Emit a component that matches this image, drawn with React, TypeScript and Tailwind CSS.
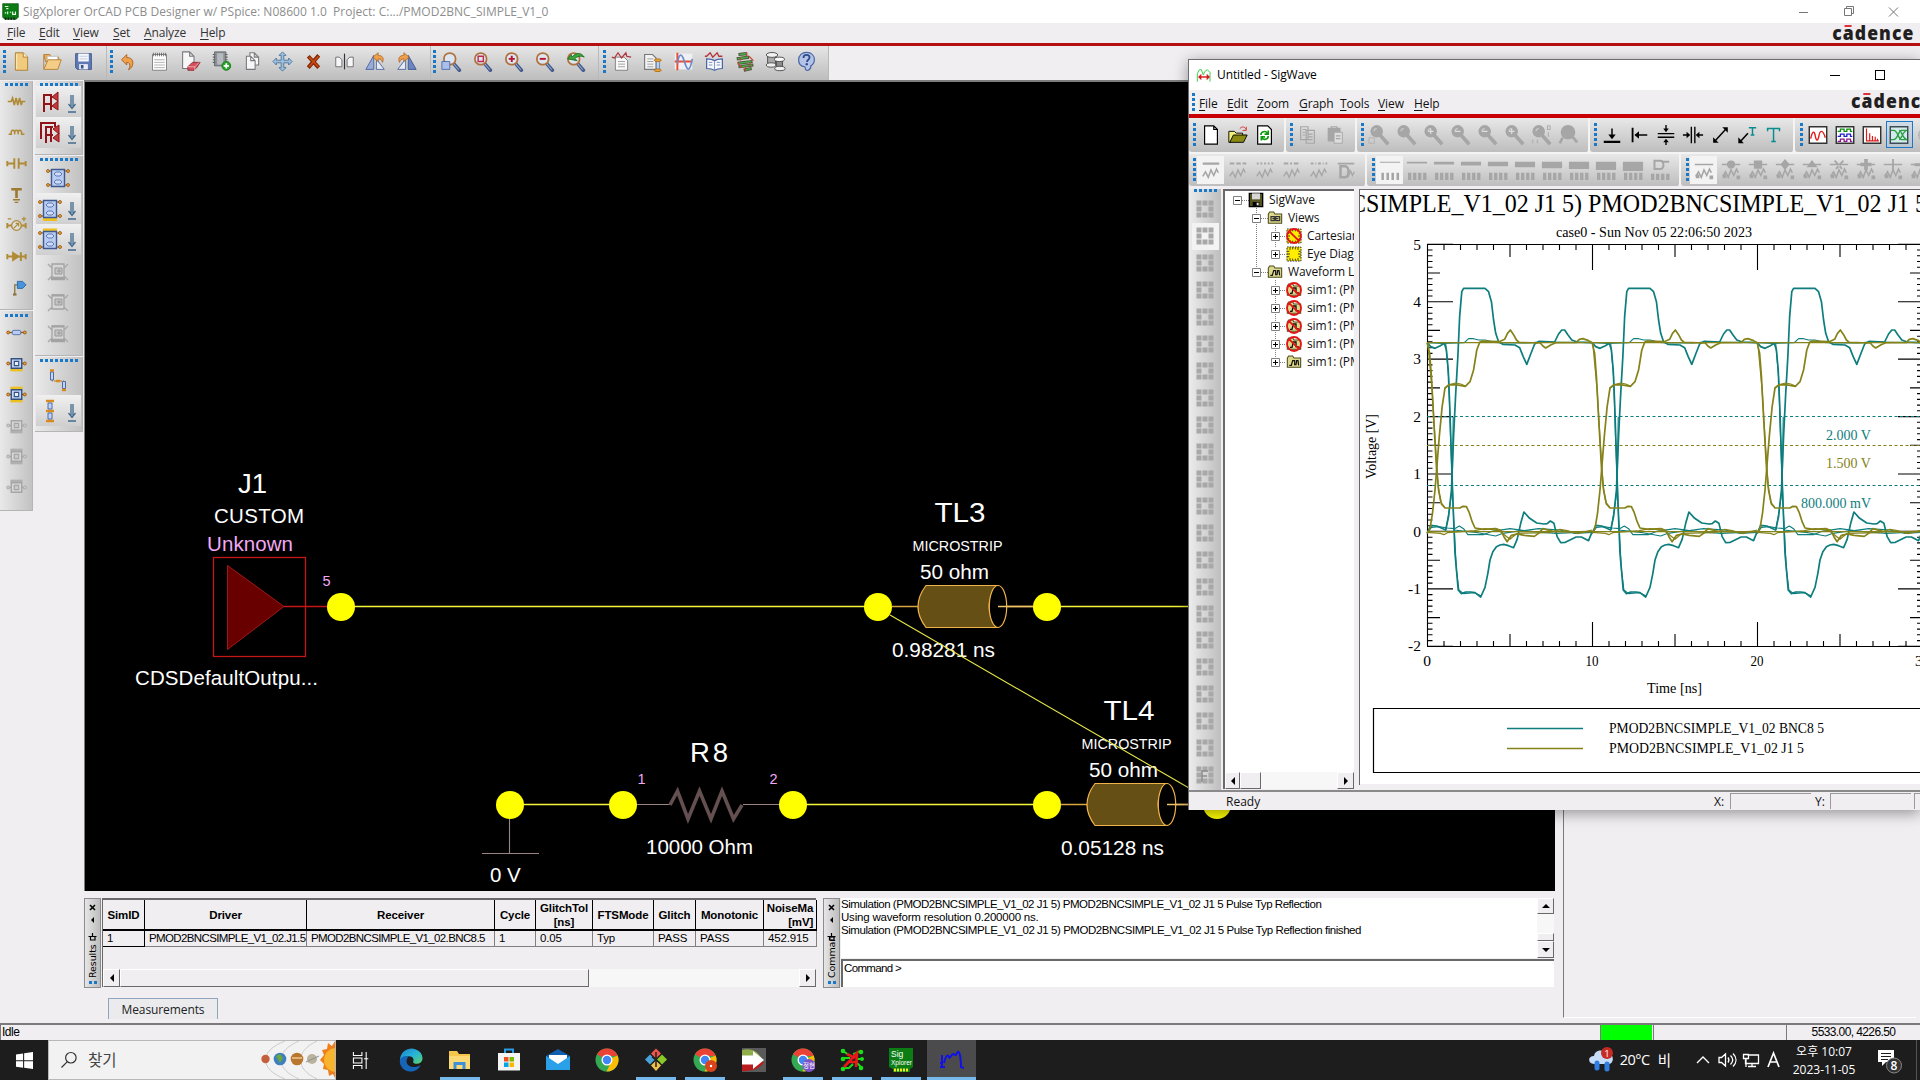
import React from 'react';

const UI = "font-['Open_Sans','Noto_Sans_CJK_KR',sans-serif]";
const ARIAL = "font-['Liberation_Sans',Arial,sans-serif]";

type Kids = { children?: React.ReactNode };

function Svg({ s = 24, className = '', children }: Kids & { s?: number; className?: string }) {
  return (
    <svg width={s} height={s} viewBox="0 0 24 24" fill="none" className={`block shrink-0 ${className}`}>
      {children}
    </svg>
  );
}

function Dots({ vertical = true, n = 5, className = '' }: { vertical?: boolean; n?: number; className?: string }) {
  return (
    <div className={`flex shrink-0 ${vertical ? 'flex-col gap-[2px]' : 'flex-row gap-[2px]'} ${className}`}>
      {Array.from({ length: n }, (_, i) => (
        <i key={i} className="block h-[3px] w-[3px] bg-[#1a78c8]" />
      ))}
    </div>
  );
}

function Cadence({ className = '' }: { className?: string }) {
  return (
    <div className={`scale-x-[0.88] font-['Open_Sans',sans-serif] text-[20px] leading-[20px] font-extrabold tracking-[1.2px] whitespace-nowrap text-[#231f20] ${className}`}>
      c
      <span className="relative">
        a<i className="absolute top-[6px] left-[2px] h-[2px] w-[8px] bg-[#e0303a]" />
      </span>
      dence
    </div>
  );
}

/* ---------- main toolbar icons ---------- */
const Page = ({ x = 5, y = 2, w = 14, h = 19, fill = '#f7f7f7', stroke = '#77787c' }) => (
  <path d={`M${x} ${y}h${w - 5}l5 5v${h - 5}h${-w}z M${x + w - 5} ${y}v5h5`} fill={fill} stroke={stroke} strokeWidth="1.2" />
);
const Lens = ({ children }: Kids) => (
  <>
    <path d="M15 15l6 7" stroke="#44598c" strokeWidth="4" strokeLinecap="round" />
    <path d="M14 14l6 7" stroke="#b9cbe9" strokeWidth="1" strokeLinecap="round" />
    <circle cx="10" cy="9" r="6.7" fill="#dce6f3" stroke="#b0713c" strokeWidth="2" />
    {children}
  </>
);

const ICONS: Record<string, React.ReactNode> = {
  new: (<><path d="M5 2h9l5 5v15H5z" fill="#f0cb7d" stroke="#a8782e" /><path d="M14 2v5h5" fill="#fff0c9" stroke="#a8782e" /><path d="M6.500 3.500v17" stroke="#fff0c9" /></>),
  open: (<><path d="M2 4h7l2 3h8v5H4z" fill="#e6ac54" stroke="#b37a32" /><path d="M6 6h12v7H6z" fill="#fff" stroke="#bbb" /><path d="M2 21L7 10h15l-4 11z" fill="#f4cd86" stroke="#b37a32" /><path d="M2 5v15" stroke="#b37a32" /></>),
  save: (<><path d="M3 3h18v18H5l-2-2z" fill="#5f79b5" stroke="#3d5285" /><path d="M6 3h12v9H6z" fill="#f6f8fd" /><path d="M7.500 6h9M7.500 9h9" stroke="#b9c3da" /><path d="M7 15h10v6H7z" fill="#e8ecf5" /><path d="M9 16h3v4H9z" fill="#3d5285" /></>),
  undo: (<path d="M4 10l6-6v3.500c5 0 7 2.500 7 6.500 0 3.500-2 5.500-5 7.500 2-3 2-5 1-7-.5-1-1.500-1.500-3-1.500V16z" fill="#f0a04a" stroke="#a35b1c" />),
  notes: (<><path d="M4 4h16v18H4z" fill="#fdfdfd" stroke="#77787c" /><path d="M6 10h12M6 13h12M6 16h12M6 19h12" stroke="#aaa" /><path d="M5 2v4M7.300 2v4M9.600 2v4M12 2v4M14.300 2v4M16.700 2v4M19 2v4" stroke="#66676b" /></>),
  erase: (<><Page x={3} y={1} w={13} h={19} /><path d="M9 18l5-5h9l-4 6-3 3H9z" fill="#d4505c" stroke="#8d2733" /><path d="M9 18h8v4M17 18l5-5" stroke="#f3b3b8" /></>),
  chip: (<><path d="M4 1h13v16H4z" fill="#8c9196" stroke="#62666b" /><path d="M7 2.500h7v13H7z" fill="#b5babf" /><path d="M2 4h3M2 7h3M2 10h3M2 13h3M16 4h3M16 7h3M16 10h3" stroke="#62666b" strokeWidth="1.300" /><circle cx="17.500" cy="17" r="5" fill="#28a428" stroke="#157515" /><path d="M17.500 14v6M14.500 17h6" stroke="#fff" strokeWidth="2" /></>),
  copy: (<><Page x={9} y={2} w={10} h={14} /><Page x={5} y={6} w={10} h={15} /></>),
  move: (<path d="M12 1l4 4h-2.500v5.500H19V8l4 4-4 4v-2.500h-5.500V19H16l-4 4-4-4h2.500v-5.500H5V16l-4-4 4-4v2.500h5.500V5H8z" fill="#9fc0dd" stroke="#48759c" />),
  del: (<><path d="M6 6l12 13M18 5L6 19" stroke="#842704" strokeWidth="4.400" /><path d="M7 7l10.500 11M17.500 6L7 18" stroke="#c44a14" strokeWidth="2" /></>),
  mirror: (<><path d="M12 3v18" stroke="#333" strokeWidth="1.300" /><path d="M2 7h4l3 3v8H2z" fill="#f7f7f7" stroke="#66676b" /><path d="M22 7h-4l-3 3v8h7z" fill="#f7f7f7" stroke="#66676b" /></>),
  rotl: (<><path d="M1 21L10 5v16z" fill="#97acd8" stroke="#48609b" /><path d="M13 21V9l9 12z" fill="#e6eaf3" stroke="#48609b" /><path d="M9 7l6-5v3c5 0 7 3 5 8-1-3-2-4-5-4v3z" fill="#f0a04a" stroke="#a35b1c" strokeWidth=".8" /></>),
  rotr: (<><path d="M23 21L14 5v16z" fill="#6a86c4" stroke="#3d5285" /><path d="M11 21V9L2 21z" fill="#e6eaf3" stroke="#48609b" /><path d="M15 7L9 2v3C4 5 2 8 4 13c1-3 2-4 5-4v3z" fill="#f0a04a" stroke="#a35b1c" strokeWidth=".8" /></>),
  zfit: (<><Lens /><path d="M1 12h9v9H1z" fill="#a9c0ec" stroke="#4c66a5" /></>),
  zbox: (<Lens><path d="M7 6h6v6H7z" stroke="#c0284a" strokeWidth="1.600" /></Lens>),
  zin: (<Lens><path d="M10 5.500v7M6.500 9h7" stroke="#b51432" strokeWidth="2.200" /></Lens>),
  zout: (<Lens><path d="M6.500 9h7" stroke="#b51432" strokeWidth="2.200" /></Lens>),
  zprev: (<><Lens /><path d="M3 9l4-5 1 3c4-5 10-6 14 0-4-2-8-1-11 2l3 2z" fill="#3da53d" stroke="#1f6b1f" /></>),
  report: (<><path d="M5 7h10l4 4v11H5z" fill="#f8f8f8" stroke="#77787c" /><path d="M8 12h8M8 15h8M8 18h8" stroke="#999" /><path d="M1 7l3 1 4-6 4 6 5-6 1 4 5 1" stroke="#b3323a" strokeWidth="1.400" /></>),
  doc2: (<><path d="M3 4h9l4 4v13H3z" fill="#f3f3f3" stroke="#77787c" strokeWidth="1.300" /><path d="M6 9h7M6 12h7M6 15h7M6 18h7" stroke="#999" /><path d="M16.500 12v9M20 12v9" stroke="#6c95d4" strokeWidth="1.300" /><ellipse cx="18" cy="10.500" rx="4" ry="1.500" fill="#f0a83a" stroke="#a3660f" /><ellipse cx="18" cy="22" rx="4" ry="1.500" fill="#f0a83a" stroke="#a3660f" /></>),
  wave: (<><path d="M2 3h20v18H2z" fill="#eef0f6" /><path d="M2 12h20M5 2v20" stroke="#ee4a30" strokeWidth="2.200" /><path d="M5 14c2-12 5-12 8-2s6 14 9-3" stroke="#6b8ccb" strokeWidth="2" /></>),
  book: (<><path d="M1 6h2l4-4 3 5 5-5 2 4h4" stroke="#b3323a" strokeWidth="1.500" /><path d="M3 9c4 0 6 0 9 2 3-2 5-2 9-2v11c-4 0-6 0-9 2-3-2-5-2-9-2z" fill="#f4f7fc" stroke="#4c66a5" strokeWidth="1.400" /><path d="M12 11v11M5.500 13h4M5.500 16h4M14.500 13h4M14.500 16h4" stroke="#7387b5" /></>),
  layers: (<><path d="M4 4l10-1M2 9l14-2M3 14l17-2M4 18l17-2M10 22l9-2" stroke="#4f4a34" strokeWidth="3.600" /><path d="M5 4l9-1M3 9l12-2M4 14l15-2M5 18l15-2M11 22l7-2" stroke="#3fae4a" strokeWidth="1.900" /><path d="M13 1v5M6 7v4M16 6l5 5M3 13l5 6M17 13v5M12 18v5" stroke="#c8453a" strokeWidth="1.400" /></>),
  spool: (<><path d="M3 5v10h9V5z" fill="#aaa" stroke="#444" /><ellipse cx="8" cy="4.500" rx="6.500" ry="2.800" fill="#f3f3f3" stroke="#444" /><ellipse cx="7" cy="16" rx="5.500" ry="2.500" fill="#eee" stroke="#444" /><path d="M13 10v10h7V10z" fill="#8c8c8c" stroke="#444" /><ellipse cx="16.500" cy="9.500" rx="5.800" ry="2.500" fill="#fafafa" stroke="#444" /><ellipse cx="17" cy="20" rx="6" ry="2.500" fill="#eee" stroke="#444" /></>),
  help: (<><path d="M12 1.500c6 0 9 4 9 8.500 0 3-1 5-4 7 0 2-1 4-3 5-4 1-3-3-4-4C5 17.500 3 14 3 10c0-5 4-8.500 9-8.500z" fill="#b4c4e8" stroke="#4c66a5" strokeWidth="1.400" /><path d="M8.500 8c0-5 7-4.500 7-.5 0 2.500-3 2.500-3 5" stroke="#2f4988" strokeWidth="2" /><circle cx="12.300" cy="15" r="1.400" fill="#2f4988" /></>),
};

const MAIN_GROUPS: { w: string; pad: string; icons: string[] }[] = [
  { w: 'w-[107px]', pad: 'pl-[3px]', icons: ['new', 'open', 'save'] },
  { w: 'w-[324px]', pad: 'pl-[3px]', icons: ['undo', 'notes', 'erase', 'chip', 'copy', 'move', 'del', 'mirror', 'rotl', 'rotr'] },
  { w: 'w-[168px]', pad: 'pl-[2px]', icons: ['zfit', 'zbox', 'zin', 'zout', 'zprev'] },
  { w: 'w-[230px]', pad: 'pl-[4px]', icons: ['report', 'doc2', 'wave', 'book', 'layers', 'spool', 'help'] },
];

function MenuItem({ label, w }: { label: string; w: string }) {
  return (
    <div className={`${w} shrink-0`}>
      <span className="underline underline-offset-2">{label[0]}</span>
      {label.slice(1)}
    </div>
  );
}

/* ---------- left palettes ---------- */
const gold = '#b08a35';
const BlockIcon = ({ top = false, bottom = false }) => (
  <>
    <path d="M1 5h22M1 19h22" stroke="#7a5a2a" strokeWidth="1.200" />
    {[5, 19].map((y) => [2, 22].map((x) => <circle key={`${x}${y}`} cx={x} cy={y} r="1.500" fill="#f0a030" stroke="#8d5416" strokeWidth=".8" />))}
    {top && <path d="M5 2h14" stroke="#ecc021" strokeWidth="3" />}
    {bottom && <path d="M5 22.500h14" stroke="#ecc021" strokeWidth="3" />}
    <path d="M5.500 3.500h13v17h-13z" fill="#b9cdf3" stroke="#3d588f" strokeWidth="1.400" />
    <path d="M8 8l2-2h4l2 2-2 2h-4zM8 16l2-2h4l2 2-2 2h-4z" fill="#cfddf8" stroke="#5c79b5" />
  </>
);
const GreyBlock = ({ k = 0 }) => (
  <>
    <path d="M2 4l3 3h14l3-3M2 20l3-3h14l3 3" stroke="#aaa" strokeWidth="1.400" />
    <path d="M6 4h12v14H6z" fill="#d6d6d6" stroke="#a3a3a3" strokeWidth="1.300" />
    <path d="M9 8h7v6H9zM12 10h2v2h-2z" fill="#c6c6c6" stroke="#999" />
    {k !== 1 && <path d="M5 18.500h14" stroke="#a3a3a3" strokeWidth="3.500" />}
    {k > 0 && <path d="M6 4.500h12" stroke="#a3a3a3" strokeWidth="2" />}
  </>
);
const FlatBlock = ({ top = false, bottom = false, grey = false }) => {
  const c = grey ? '#a6a6a6' : '#34507f';
  return (
    <>
      <path d="M2 12h20" stroke={grey ? '#a6a6a6' : '#7a5a2a'} strokeWidth="1.500" />
      <circle cx="2.500" cy="12" r="1.700" fill={grey ? '#ccc' : '#f0a030'} stroke={grey ? '#a6a6a6' : '#8d5416'} />
      <circle cx="21.500" cy="12" r="1.700" fill={grey ? '#ccc' : '#f0a030'} stroke={grey ? '#a6a6a6' : '#8d5416'} />
      {top && <path d="M5 4.500h14" stroke={grey ? '#b0b0b0' : '#ecc021'} strokeWidth="3" />}
      {bottom && <path d="M5 19.500h14" stroke={grey ? '#b0b0b0' : '#ecc021'} strokeWidth="3" />}
      <path d="M6 6.500h12v11H6z" fill={grey ? '#d6d6d6' : '#c3d5f6'} stroke={c} strokeWidth="1.600" />
      <path d="M9.500 9.500h5v5h-5z" fill={grey ? '#c9c9c9' : '#e9f0fd'} stroke={c} strokeWidth="1.300" />
    </>
  );
};

const PAL_A: React.ReactNode[] = [
  <path d="M2 12h4l1.500-4 2 8 2-8 2 8 2-8 2 8 1-4H22" stroke={gold} strokeWidth="1.800" />,
  <path d="M3 14h3c-1-6 4-6 4 0-1-6 4-6 4 0-1-6 4-6 4 0h3" stroke={gold} strokeWidth="1.800" />,
  <path d="M1 12h8M15 12h8M9.500 6v12M14.500 6v12M1.500 9v6M22.500 9v6" stroke={gold} strokeWidth="2.200" />,
  <><path d="M6 6h12M12 6v10" stroke="#9c7a30" strokeWidth="3" /><path d="M8 18h8M10 21h4" stroke="#9c7a30" strokeWidth="1.600" /></>,
  <><path d="M1 12h22M1.500 9v6M22.500 9v6" stroke={gold} strokeWidth="2.200" /><circle cx="12" cy="12" r="5.500" fill="#ddd" stroke={gold} strokeWidth="1.500" /><path d="M9 15l5-5M11 9.500h3.500V13M2 4.500h4M18 4.500h5M20.500 2v5" stroke={gold} strokeWidth="1.300" /></>,
  <><path d="M1 12h22M1.500 9v6M22.500 9v6M17 7v10" stroke={gold} strokeWidth="2.200" /><path d="M7 6l9 6-9 6z" fill={gold} /></>,
  <><path d="M10 20V9h4" stroke="#8a7343" strokeWidth="1.500" /><path d="M13 5h6l4 4-4 4h-6z" fill="#4793dc" stroke="#2765a4" /><path d="M8 20h4" stroke="#8a7343" strokeWidth="2.500" /></>,
];
const PAL_B: React.ReactNode[] = [
  <><path d="M2 12h20" stroke="#8d5416" strokeWidth="1.400" /><circle cx="2.500" cy="12" r="1.700" fill="#f0a030" stroke="#8d5416" /><circle cx="21.500" cy="12" r="1.700" fill="#f0a030" stroke="#8d5416" /><rect x="7" y="9.500" width="10" height="5" rx="2" fill="#b9cdf3" stroke="#4d6aa5" /></>,
  <FlatBlock bottom />,
  <FlatBlock top bottom />,
  <FlatBlock grey bottom />,
  <FlatBlock grey bottom top />,
  <FlatBlock grey top />,
];

const Down = () => (
  <svg width="10" height="20" viewBox="0 0 10 20" fill="none" className="mt-[4px] block shrink-0">
    <path d="M4 1v12M6 1v12M1.500 10L5 14.500 8.500 10M1 18h8" stroke="#426a8f" strokeWidth="1.300" />
  </svg>
);

function PalBtn({ h, down = false, children }: Kids & { h: string; down?: boolean }) {
  return (
    <div className={`${h} flex items-center ${down ? 'w-[45px] justify-between bg-gradient-to-b from-[#f0f0f0] to-[#cfcfcf] pr-[4px] pl-[2px]' : 'w-[45px] justify-center pt-[2px] pr-[1px]'}`}>
      <Svg>{children}</Svg>
      {down && <Down />}
    </div>
  );
}

const palette = 'border-r border-b border-[#b5b5b5] bg-gradient-to-r from-[#e9e9e9] to-[#c2c2c2]';

/* ---------- schematic ---------- */
function Tline({ dx, dy, name, delay }: { dx: number; dy: number; name: string; delay: string }) {
  return (
    <g transform={`translate(${dx} ${dy})`}>
      <path d="M892 606.500H918M998 606.500H1034" stroke="#d9a441" strokeWidth="1.300" />
      <path d="M926 585.500H998Q980 606.500 998 627.500H926Q910 606.500 926 585.500z" fill="#664f14" stroke="#f0b24a" strokeWidth="1.200" />
      <ellipse cx="998" cy="606.500" rx="8.700" ry="21" fill="#000" stroke="#f0b24a" strokeWidth="1.200" />
      <path d="M998 606.500H1034" stroke="#f0c46a" strokeWidth="1.300" />
      <g fill="#fff">
        <text x="934.500" y="522" fontSize="27.500" textLength="51" lengthAdjust="spacingAndGlyphs">{name}</text>
        <text x="912.500" y="551" fontSize="14" textLength="90" lengthAdjust="spacingAndGlyphs">MICROSTRIP</text>
        <text x="920" y="579" fontSize="20" textLength="69" lengthAdjust="spacingAndGlyphs">50 ohm</text>
        <text x="892" y="657" fontSize="20" textLength="103" lengthAdjust="spacingAndGlyphs">{delay}</text>
      </g>
    </g>
  );
}

const NODES: [number, number][] = [[341, 607], [878, 607], [1047, 607], [510, 805], [623, 805], [793, 805], [1047, 805], [1217, 805]];

function Schematic() {
  return (
    <svg width="1470" height="809" viewBox="85 82 1470 809" className={`block ${ARIAL}`} fill="none">
      <path d="M341 606.500H878M1047 606.500H1555M510 804.500H623M793 804.500H1047" stroke="#f5f53a" strokeWidth="1.300" />
      <rect x="213.500" y="557.500" width="92" height="99" stroke="#c41616" strokeWidth="1.300" />
      <path d="M227.500 565.500v84L284 606.500z" fill="#680000" stroke="#a01818" />
      <path d="M284 606.500h44" stroke="#c41616" strokeWidth="1.300" />
      <Tline dx={0} dy={0} name="TL3" delay="0.98281 ns" />
      <Tline dx={169} dy={198} name="TL4" delay="0.05128 ns" />
      <path d="M890 615L1189 788L1217 804" stroke="#e8e84a" strokeWidth="1.100" />
      <path d="M623 804.500h48M743 804.500h50M509.500 818V853M482 853.500h57" stroke="#9a8484" strokeWidth="1.100" />
      <path d="M670 805l7.500-14 10.500 28 11.500-28 11.500 28 11-28 11.500 28 8.500-14" stroke="#645050" strokeWidth="3.600" />
      {NODES.map(([x, y]) => (
        <circle key={`${x}-${y}`} cx={x} cy={y} r="14" fill="#ffff00" />
      ))}
      <g fill="#fff">
        <text x="238" y="493" fontSize="27.500">J1</text>
        <text x="214" y="523" fontSize="20.500" textLength="90">CUSTOM</text>
        <text x="135" y="684.500" fontSize="20.500" textLength="183">CDSDefaultOutpu...</text>
        <text x="690" y="762" fontSize="27.500" textLength="38">R8</text>
        <text x="646" y="854" fontSize="20.500" textLength="107">10000 Ohm</text>
        <text x="490" y="882" fontSize="20.500">0 V</text>
      </g>
      <g fill="#f3a9f3">
        <text x="207" y="551" fontSize="20.500" textLength="86">Unknown</text>
        <text x="322.500" y="586" fontSize="14.500">5</text>
        <text x="637.500" y="784" fontSize="14.500">1</text>
        <text x="769.500" y="784" fontSize="14.500">2</text>
      </g>
    </svg>
  );
}

/* ---------- results & command panels ---------- */
function SideGrip({ label }: { label: string }) {
  return (
    <div className="flex h-[90px] w-[17px] shrink-0 flex-col items-center border border-[#8c8c8c] bg-gradient-to-r from-[#e6e6e6] to-[#bdbdbd]">
      <svg width="15" height="43" viewBox="0 0 15 43" fill="none" className="block shrink-0">
        <path d="M5 6l5 5M10 6l-5 5" stroke="#000" strokeWidth="1.600" />
        <path d="M9 18v6l-3-3z" fill="#000" />
        <path d="M7.500 34v3.500M3.500 37.500h8M5.500 37.500v3.500h4.500v-3.500" stroke="#000" strokeWidth="1.200" />
      </svg>
      <div className="flex h-[36px] items-center font-['DejaVu_Sans',sans-serif] text-[9.500px] leading-[14px] tracking-[-0.1px] text-black [writing-mode:vertical-rl]">
        <span className="block h-full rotate-180 text-left whitespace-nowrap">{label}</span>
      </div>
      <Dots vertical={false} n={2} className="mt-[3px]" />
    </div>
  );
}

const raised = 'border border-t-white border-l-white border-r-[#696969] border-b-[#696969] bg-[#f0eef1] flex items-center justify-center';
const Tri = ({ d }: { d: string }) => (
  <svg width="8" height="8" viewBox="0 0 8 8" className="block"><path d={d} fill="#000" /></svg>
);
const LEFT = 'M6 0v8L2 4z';
const RIGHT = 'M2 0v8l4-4z';
const UP = 'M0 6h8L4 2z';
const DOWN = 'M0 2h8L4 6z';
const checker = 'bg-[#f8f7f8]';

const COLS: { w: string; h: string; v: string; cls?: string }[] = [
  { w: 'w-[42px]', h: 'SimID', v: '1' },
  { w: 'w-[162px]', h: 'Driver', v: 'PMOD2BNCSIMPLE_V1_02.J1.5' },
  { w: 'w-[188px]', h: 'Receiver', v: 'PMOD2BNCSIMPLE_V1_02.BNC8.5' },
  { w: 'w-[41px]', h: 'Cycle', v: '1' },
  { w: 'w-[57px]', h: 'GlitchTol\n[ns]', v: '0.05' },
  { w: 'w-[61px]', h: 'FTSMode', v: 'Typ' },
  { w: 'w-[42px]', h: 'Glitch', v: 'PASS' },
  { w: 'w-[68px]', h: 'Monotonic', v: 'PASS' },
  { w: 'w-[53px]', h: 'NoiseMa\n[mV]', v: '452.915', cls: 'text-right' },
];

function Results() {
  return (
    <div className={`flex h-[89px] w-[714px] flex-col border-t-2 border-l border-[#696969] ${ARIAL} text-black`}>
      <div className="flex h-[31px]">
        {COLS.map((c) => (
          <div key={c.h} className={`${c.w} flex shrink-0 items-center justify-center border-r border-b-2 border-black text-[11.5px] leading-[14px] font-bold tracking-[-0.1px] whitespace-pre ${c.cls ?? 'text-center'}`}>
            {c.h}
          </div>
        ))}
      </div>
      <div className="flex h-[16px]">
        {COLS.map((c, i) => (
          <div key={c.h} className={`${c.w} shrink-0 border-r border-b border-[#808080] pl-[4px] text-[11.5px] leading-[15px] whitespace-nowrap ${c.v.length > 9 ? 'tracking-[-0.62px]' : 'tracking-[-0.15px]'} ${i === 0 ? 'border-black' : ''}`}>
            {c.v}
          </div>
        ))}
      </div>
      <div className="mt-auto flex h-[18px]">
        <div className={`w-[17px] ${raised}`}><Tri d={LEFT} /></div>
        <div className={`w-[469px] ${raised}`} />
        <div className={`flex-1 ${checker}`} />
        <div className={`w-[17px] ${raised}`}><Tri d={RIGHT} /></div>
      </div>
    </div>
  );
}

function CommandPane() {
  return (
    <div className={`flex h-[90px] w-[713px] flex-col ${ARIAL} text-[11.5px] leading-[13px] text-black`}>
      <div className="flex h-[60px] bg-white">
        <div className="flex-1 whitespace-nowrap">
          <div className="tracking-[-0.46px]">Simulation (PMOD2BNCSIMPLE_V1_02 J1 5) PMOD2BNCSIMPLE_V1_02 J1 5 Pulse Typ Reflection</div>
          <div className="tracking-[-0.2px]">Using waveform resolution 0.200000 ns.</div>
          <div className="tracking-[-0.45px]">Simulation (PMOD2BNCSIMPLE_V1_02 J1 5) PMOD2BNCSIMPLE_V1_02 J1 5 Pulse Typ Reflection finished</div>
        </div>
        <div className={`flex w-[17px] flex-col ${checker}`}>
          <div className={`h-[16px] ${raised}`}><Tri d={UP} /></div>
          <div className="flex-1" />
          <div className={`h-[8px] ${raised}`} />
          <div className={`h-[17px] ${raised}`}><Tri d={DOWN} /></div>
        </div>
      </div>
      <div className="mt-px h-[28px] border-t-2 border-l-2 border-[#696969] bg-white pt-[1px] pl-[1px] tracking-[-0.65px]">Command &gt;</div>
    </div>
  );
}

/* ---------- SigWave ---------- */
const g = '#a6a6a6';
const GLens = ({ children }: Kids) => (
  <>
    <path d="M13 12l9 10" stroke={g} strokeWidth="4" />
    <circle cx="9.500" cy="8" r="6.800" fill={g} />
    <path d="M6.500 8c0-2 1-3 3-3" stroke="#cfcfcf" strokeWidth="1.200" />
    {children}
  </>
);
const wv = 'M3 19l3-5 3 6 3-8 3 6 3-7 2 4';

const SW: Record<string, React.ReactNode> = {
  new: (<path d="M5 2h10l4 4v16H5zM15 2v4h4" fill="#fff" stroke="#000" strokeWidth="1.300" />),
  open: (<><path d="M2 8h6l2 2h7v3H8l-4 7H2z" fill="#f4f07a" stroke="#000" /><path d="M3 20l4-8h15l-4 8z" fill="#8b8a12" stroke="#000" /><path d="M14 5c3-3 5-2 7 1M21 3v4h-4" stroke="#d62a2a" /></>),
  reload: (<><path d="M4 2h11l4 4v16H4z" fill="#fff" stroke="#000" strokeWidth="1.300" /><path d="M7.500 12c0-4 5-5 7-2M15.500 7v4h-4M15.500 13c0 4-5 5-7 2M8 18v-4h4" stroke="#0b9a0b" strokeWidth="1.800" /></>),
  copy: (<path d="M4 3h8v14H4zM10 7h9v14h-9zM6 6h4M6 9h3M6 12h3M12 11h5M12 14h5M12 17h5" stroke={g} strokeWidth="1.300" />),
  paste: (<><path d="M4 4h14v15H4z" fill={g} /><path d="M11 9h9v12h-9z" fill="#ddd" stroke={g} /><path d="M13 13h5M13 16h5M8 3h6v3H8z" stroke={g} strokeWidth="1.300" /></>),
  l0: (<GLens><path d="M1 15h6v6H1z" stroke={g} strokeDasharray="2 1" /></GLens>),
  l1: (<GLens />),
  l2: (<GLens><path d="M9.500 5v6M6.500 8h6" stroke="#e0e0e0" strokeWidth="1.300" /></GLens>),
  l3: (<GLens><path d="M6.500 8h6" stroke="#e0e0e0" strokeWidth="1.300" /></GLens>),
  l6: (<GLens><path d="M19 2h3v4h-3zM20 9v5M3 17v4M8 17v4" stroke={g} /></GLens>),
  l7: (<><path d="M6 15l-3 6M17 14l5 6" stroke={g} strokeWidth="3" /><circle cx="12" cy="9" r="8" fill={g} /></>),
  hbar: (<><path d="M12 5v9" stroke="#000" strokeWidth="1.600" /><path d="M3 19.500h18" stroke="#000" strokeWidth="2.200" /><path d="M8 11.500h8l-4 5z" fill="#000" /></>),
  vbar: (<><path d="M5 4v16" stroke="#000" strokeWidth="2" /><path d="M8 12h13" stroke="#000" strokeWidth="1.500" /><path d="M12 8v8l-5-4z" fill="#000" /></>),
  hh: (<><path d="M3 10.500h18M3 14.500h18M12 1v5M12 19v4" stroke="#000" strokeWidth="1.500" /><path d="M9 5h6l-3 4zM9 20h6l-3-4z" fill="#000" /></>),
  vv: (<><path d="M10.200 3v18M14 3v18M1 12h6M17 12h6" stroke="#000" strokeWidth="1.500" /><path d="M5 8.500v7l4-3.500zM19 8.500v7l-4-3.500z" fill="#000" /></>),
  diag: (<><path d="M6 19L19 5" stroke="#000" strokeWidth="1.600" /><path d="M20.500 3.500v6l-6-6zM4.500 20.500v-6l6 6z" fill="#000" /></>),
  diagT: (<><path d="M4 20L13 10" stroke="#000" strokeWidth="1.700" /><path d="M2.500 21v-6.500l6 6.500z" fill="#000" /><path d="M14 4h8M18 4v8M16 12h4" stroke="#0a8c8c" strokeWidth="1.600" /></>),
  T: (<path d="M5 8V5h13v3M11.500 5v14M9 19h5" stroke="#0a8c8c" strokeWidth="1.600" />),
  sq1: (<><path d="M2.500 3h19v18h-19z" fill="#fff" stroke="#333" strokeWidth="1.600" /><path d="M4 16c2-9 4-9 5-3s3 6 4 0 4-8 7 2" stroke="#e01a1a" strokeWidth="1.500" /></>),
  sq2: (<><path d="M2.500 3h19v18h-19z" fill="#fff" stroke="#333" strokeWidth="1.600" /><path d="M4 8h3V5.500h4V8h3V5.500h4V8h2" stroke="#0a8f0a" strokeWidth="1.400" /><path d="M4 13.500h3V11h4v2.500h3V11h4v2.500h2" stroke="#2020d0" strokeWidth="1.400" /><path d="M4 19h3v-2.500h4V19h3v-2.500h4V19h2" stroke="#8a1a8a" strokeWidth="1.400" /></>),
  sq3: (<><path d="M2.500 3h19v18h-19z" fill="#fff" stroke="#333" strokeWidth="1.600" /><path d="M6 5v14M9.500 10v8M12.500 13v5M15.500 14v4M18 16v2M5.500 18.500h14" stroke="#e01a1a" strokeWidth="1.300" /></>),
  sq4: (<><path d="M2.500 3h19v18h-19z" fill="#e3f5ea" stroke="#222" strokeWidth="1.600" /><path d="M3 7h3c5 0 5 10 9 10h6M3 17h3c5 0 5-10 9-10h6M12 7c3 0 4 10 9 10M12 17c3 0 4-10 9-10" stroke="#0a8f0a" strokeWidth="1.500" /></>),
  sq5: (<><circle cx="12" cy="12" r="8" stroke={g} /><path d="M4 12h16M12 4v16" stroke={g} /></>),
};

function Strip({ w, icons, sel = -1, pad = 'pl-[4px]' }: { w: string; icons: React.ReactNode[]; sel?: number; pad?: string }) {
  return (
    <div className={`${w} flex h-full shrink-0 items-center overflow-hidden rounded-b-[3px] border-r-2 border-[#f4f4f4] bg-gradient-to-b from-[#e8e8e8] to-[#bebebe] ${pad}`}>
      <Dots className="mb-[2px]" />
      <div className="ml-[1px] flex">
        {icons.map((ic, i) => (
          <div key={i} className={`flex h-[28px] w-[27.100px] shrink-0 items-center justify-center ${i === sel ? 'bg-[#f3f3f3]' : ''}`}>
            <Svg s={22}>{ic}</Svg>
          </div>
        ))}
      </div>
    </div>
  );
}

const lineStyles = [
  <><path d="M3 5h18" stroke={g} strokeWidth="2.500" /><path d="M3 19l3-5 3 6 3-8 3 6 3-7 2 4" stroke={g} strokeWidth="1.700" /></>,
  ...['5 2', '2 2', '5 2 2 2', '3 2 1 2'].map((d) => (
    <><path d="M3 5h18" stroke={g} strokeWidth="2.200" strokeDasharray={d} /><path d={wv} stroke={g} strokeWidth="1.500" /></>
  )),
  <><path d="M3 5h18" stroke={g} strokeWidth="2" /><path d="M6 8h5c5 0 5 12 0 12H6z" stroke={g} strokeWidth="2.800" /><path d="M14 20l3-7 2 5 2-4" stroke={g} strokeWidth="1.400" /></>,
];
const widthStyles = [
  ...Array.from({ length: 10 }, (_, i) => (
    <><path d={`M1 3h22v${i + 1}h-22z`} fill={g} /><path d="M4 15v8M9.500 15v8M15 15v8M20.500 15v8" stroke={g} strokeWidth={i === 0 ? 2.8 : 3.6} /></>
  )),
  <><path d="M6 2h6c5 0 5 9 0 9H6z" stroke={g} strokeWidth="2.200" /><path d="M14 3h8" stroke={g} strokeWidth="2" /><path d="M4 16v7M9.500 16v7M15 16v7M20.500 16v7" stroke={g} strokeWidth="3.600" /></>,
];
const marks = ['', 'M12 1.500a4.500 4.500 0 100 9 4.500 4.500 0 000-9', 'M7.500 1.500h9v9h-9z', 'M12 0l5 6-5 6-5-6z', 'M12 1l6 8H6z', 'M8 1l8 9-1.500 1.500-8-9zM16 1l-8 9 1.500 1.500 8-9z', 'M10 0h4v12h-4zM6 4h12v4H6z', 'M11 0h2v12h-2z', 'M6 4.500h12v3.500H6z'].map((m) => (
  <><path d="M2 6h20" stroke={g} strokeWidth="1.500" />{m && <path d={m} fill={g} />}<path d={wv} stroke={g} strokeWidth="1.700" /><path d="M3 17h4v4H3zM18 18h4v4h-4z" fill={g} /></>
));

function Box({ plus }: { plus: boolean }) {
  return (
    <svg width="9" height="9" viewBox="0 0 9 9" className="block shrink-0" fill="none">
      <path d="M.5.5h8v8h-8z" fill="#fff" stroke="#808080" />
      <path d={plus ? 'M2 4.500h5M4.500 2v5' : 'M2 4.500h5'} stroke="#000" />
    </svg>
  );
}

const folder = <path d="M2 6l2-3h6l2 3h10v14H2z" fill="#dcd98c" stroke="#4d4c1c" strokeWidth="1.600" />;
const no = <path d="M12 1.500a10.500 10.500 0 100 21 10.500 10.500 0 000-21M5 5l14 14" stroke="#e41616" strokeWidth="2.800" />;
const burst = <><path d="M1.500 1.500h21v21h-21z" fill="#ffee00" stroke="#222" strokeWidth="1.400" strokeDasharray="2.500 1.500" /><path d="M6 2v4M10 2v3M14 2v3M18 2v4M6 22v-4M10 22v-3M14 22v-3M18 22v-4M2 8h3M2 12h4M2 16h3M22 8h-3M22 12h-4M22 16h-3" stroke="#222" strokeWidth="1.300" /></>;
const TREE: { lvl: 0 | 1 | 2; plus: boolean; label: string; icon: React.ReactNode }[] = [
  { lvl: 0, plus: false, label: 'SigWave', icon: <><path d="M2 2h20v20H2z" fill="#555420" stroke="#000" strokeWidth="2" /><path d="M6 2h12v9H6z" fill="#d6d6d6" /><path d="M7 15h10v7H7z" fill="#000" /><path d="M13 16h3v4h-3z" fill="#ddd" /></> },
  { lvl: 1, plus: false, label: 'Views', icon: <>{folder}<path d="M6 10h5v6H6zM13 10h6v6h-6zM8 13h9" stroke="#333" strokeWidth="1.800" /></> },
  { lvl: 2, plus: true, label: 'Cartesian', icon: <>{burst}{no}</> },
  { lvl: 2, plus: true, label: 'Eye Diagram', icon: burst },
  { lvl: 1, plus: false, label: 'Waveform Library', icon: <>{folder}<path d="M5 17h3l2-7h3v6h2l1-6h2l1 7" stroke="#111" strokeWidth="1.800" /></> },
  ...[0, 1, 2, 3].map(() => ({ lvl: 2 as const, plus: true, label: 'sim1: (PMOD2', icon: <>{folder}<path d="M6 17h3l2-8h4v7h4" stroke="#111" strokeWidth="2" />{no}</> })),
  { lvl: 2, plus: true, label: 'sim1: (PMOD2', icon: <>{folder}<path d="M5 17h3l2-7h3v6h2l1-6h2l1 7" stroke="#111" strokeWidth="1.800" /></> },
];
const INDENT = ['pl-[8px]', 'pl-[27px]', 'pl-[46px]'];

function Tree() {
  return (
    <div className="flex h-[600px] w-[131px] shrink-0 flex-col overflow-hidden border-t-2 border-l-2 border-[#696969] bg-white">
      <div className="relative flex-1">
        <svg width="60" height="190" className="absolute top-[-1px] left-0" fill="none">
          <path d="M31.500 16v66M50.500 36v22M50.500 90v80M17 10.500h8M36 28.500h8M55 46.500h5M55 64.500h5M36 82.500h8M55 100.500h5M55 118.500h5M55 136.500h5M55 154.500h5M55 172.500h5" stroke="#808080" strokeDasharray="1 1" />
        </svg>
        {TREE.map((t, i) => (
          <div key={i} className={`relative flex h-[18px] items-center whitespace-nowrap ${INDENT[t.lvl]}`}>
            <Box plus={t.plus} />
            <Svg s={16} className="ml-[6px]">{t.icon}</Svg>
            <span className={`ml-[5px] ${UI} text-[12px] tracking-[-0.1px] text-[#111]`}>{t.label}</span>
          </div>
        ))}
      </div>
      <div className="flex h-[17px]">
        <div className={`w-[15px] ${raised}`}><Tri d={LEFT} /></div>
        <div className={`w-[21px] ${raised}`} />
        <div className={`flex-1 ${checker}`} />
        <div className={`w-[17px] ${raised}`}><Tri d={RIGHT} /></div>
      </div>
    </div>
  );
}

/* Trace points for one 10 ns period, on a grid of 46.2 units per ns and 172.2 units per volt. */
const TEAL = [
  'M188 458L198 470L210 475L225 467L236 460L242 480L247 540L251 640L256 800L260 930L266 1090L271 1150L275 1200L284 1211L296 1206L310 1206L322 1208L338 1221L350 1192L358 1150L364 1110L372 1085L382 1070L392 1065L402 1063L416 1067L430 1073L440 1048L450 1000L459 966L475 985L495 999L515 1002L524 1001L533 993L543 1000L552 1040L562 1058L575 1057L595 1046L605 1041L620 1041L640 1052L650 1025',
  'M188 1030L198 1006L215 1008L240 1020L248 980L256 900L262 740L268 610L274 500L279 380L285 305L290 295L350 295L360 305L368 335L374 390L380 430L388 455L400 463L434 465L447 473L457 500L467 523L478 492L489 462L502 454L545 456L556 432L565 420L573 420L582 434L593 450L608 456L650 458',
  'M188 458L232 460L292 458L304 446L318 446L332 450L350 450L376 457L400 459L430 459L470 459L500 456L540 457L650 458',
  'M188 1030L200 1012L220 1010L245 1014L265 1016L278 1008L290 1016L302 1034L345 1034L370 1024L420 1016L460 1022L500 1016L560 1020L600 1030L650 1027',
  'M240 460L248 560L254 760L262 980L270 1140L277 1200L290 1211L320 1208L340 1218',
  'M240 1020L250 960L258 900L261 680M262 1020L330 1028L380 1038L400 1030L450 1022L550 1030L650 1025',
];
const OLIVE = [
  'M188 458L195 490L200 560L207 700L214 830L220 900L228 942L238 954L280 954L288 949L298 950L306 968L314 995L322 1014L345 1018L380 1016L395 1022L403 1040L412 1055L424 1036L440 1032L460 1036L488 1039L500 1030L512 1016L540 1024L600 1026L650 1024',
  'M188 1030L196 1015L203 970L210 900L216 820L222 740L230 650L238 594L248 585L265 584L280 586L295 589L308 575L318 540L327 480L335 457L342 453L390 455L405 448L413 430L421 420L430 434L438 450L446 457L505 459L512 468L520 474L535 464L548 458L606 457L614 448L624 446L640 452L650 458',
  'M190 462L202 600L212 780L219 890L226 936L238 953',
  'M236 596L250 584L268 579L282 582L295 588',
  'M188 1027L225 1030L235 1034L245 1028L320 1022L350 1016L390 1022L420 1048L440 1030L530 1028L560 1018L580 1022L610 1031L650 1020',
];

function Chart() {
  const left: string[] = [];
  for (let i = 0; i <= 70; i++) {
    const y = (646.3 - i * 5.743).toFixed(1);
    left.push(`M1427 ${y}h${i % 10 === 0 ? 26 : i % 5 === 0 ? 13 : 5.5}`);
    left.push(`M1920 ${y}h${i % 10 === 0 ? -22 : i % 5 === 0 ? -10 : -3}`);
  }
  for (let i = 1; i < 30; i++) {
    const x = (1427.5 + i * 16.5).toFixed(1);
    const [b, t] = i % 10 === 0 ? [24, 26] : i % 5 === 0 ? [12, 13] : [5, 6];
    left.push(`M${x} 646v-${b}M${x} 244v${t}`);
  }
  return (
    <svg width="560" height="594" viewBox="1360 190 560 594" className="block bg-white font-['Liberation_Serif','Times_New_Roman',serif]" fill="none">
      <path d="M1427.500 646.500V244.500H1920M1427 646.500H1920" stroke="#000" strokeWidth="1.100" />
      <path d={left.join('')} stroke="#000" strokeWidth="1.100" />
      <path d="M1427 416.500H1920M1427 485.500H1920" stroke="#0d7d7d" strokeDasharray="3 2.500" />
      <path d="M1427 445.500H1920" stroke="#85821a" strokeDasharray="3 2.500" />
      {[0, 462, 924, 1386].map((o) => (
        <g key={o} transform={`translate(${1360 + o / 2.8} 190) scale(${1 / 2.8} ${1 / 3})`} strokeLinejoin="round">
          {TEAL.map((d, i) => (
            <path key={i} d={d} stroke="#0d7d7d" strokeWidth={i < 2 ? 1.7 : 1.1} vectorEffect="non-scaling-stroke" />
          ))}
          {OLIVE.map((d, i) => (
            <path key={i} d={d} stroke="#85821a" strokeWidth={i < 2 ? 1.7 : 1.2} vectorEffect="non-scaling-stroke" />
          ))}
        </g>
      ))}
      <path d="M1427 342.600H1920M1427 531.700H1920" stroke="#85821a" strokeWidth="1.300" />
      <g fill="#000" fontSize="15.500">
        <text x="1350" y="212" fontSize="24.500" textLength="577" lengthAdjust="spacingAndGlyphs">CSIMPLE_V1_02 J1 5) PMOD2BNCSIMPLE_V1_02 J1 5</text>
        <text x="1556" y="237" textLength="196" lengthAdjust="spacingAndGlyphs">case0 - Sun Nov 05 22:06:50 2023</text>
        {[5, 4, 3, 2, 1, 0, -1, -2].map((v) => (
          <text key={v} x="1421" y={536.5 - v * 57.4} textAnchor="end">{v}</text>
        ))}
        <text x="1427" y="665.500" textAnchor="middle">0</text>
        <text x="1592" y="665.500" textAnchor="middle" textLength="13" lengthAdjust="spacingAndGlyphs">10</text>
        <text x="1757" y="665.500" textAnchor="middle" textLength="13" lengthAdjust="spacingAndGlyphs">20</text>
        <text x="1915" y="665.500">30</text>
        <text x="1647" y="693" textLength="55" lengthAdjust="spacingAndGlyphs">Time [ns]</text>
        <text transform="translate(1375.500 479) rotate(-90)" textLength="65" lengthAdjust="spacingAndGlyphs">Voltage [V]</text>
        <text x="1609" y="733" textLength="215" lengthAdjust="spacingAndGlyphs">PMOD2BNCSIMPLE_V1_02 BNC8 5</text>
        <text x="1609" y="753" textLength="195" lengthAdjust="spacingAndGlyphs">PMOD2BNCSIMPLE_V1_02 J1 5</text>
      </g>
      <g fontSize="15.500">
        <text x="1826" y="440" fill="#0d7d7d" textLength="45" lengthAdjust="spacingAndGlyphs">2.000 V</text>
        <text x="1826" y="468" fill="#85821a" textLength="45" lengthAdjust="spacingAndGlyphs">1.500 V</text>
        <text x="1801" y="508" fill="#0d7d7d" textLength="70" lengthAdjust="spacingAndGlyphs">800.000 mV</text>
      </g>
      <path d="M1920 708.500H1373.500V772.500H1920" stroke="#000" strokeWidth="1.200" />
      <path d="M1507 728.500h76" stroke="#0d7d7d" strokeWidth="1.300" />
      <path d="M1507 748.500h76" stroke="#85821a" strokeWidth="1.300" />
    </svg>
  );
}

function Grid9({ sel, last }: { sel: boolean; last: boolean }) {
  return (
    <div className={`flex h-[26.950px] w-[27px] items-center justify-center ${sel ? 'bg-[#f3f3f3]' : ''}`}>
      <svg width="18" height="18" viewBox="0 0 18 18" className="block" fill="none">
        {[0, 6, 12].map((y) => [0, 6, 12].map((x) => (x === 6 && y === 6 ? null : <rect key={`${x}${y}`} x={x + 0.5} y={y + 0.5} width="5" height="5" fill="#a8a8a8" />)))}
        {last && <path d="M6 16V5h6M6 10h5" stroke="#8c8c8c" strokeWidth="1.500" />}
      </svg>
    </div>
  );
}

function SigWave() {
  return (
    <div className={`absolute top-[59px] left-[1188px] flex h-[751px] w-[732px] flex-col overflow-hidden border-t border-l border-[#6d6d6d] bg-[#f0eef1] shadow-[0_3px_14px_rgba(0,0,0,0.4)] ${UI}`}>
      <div className="flex h-[30px] shrink-0 items-center bg-white pl-[7px] text-[12px] text-black">
        <Svg s={16}>
          <path d="M2 22V10l3-6h3l3 8 2-5 4-3 4 4v14" stroke="#3fd04a" strokeWidth="1.500" />
          <path d="M5 15h14" stroke="#d81a1a" strokeWidth="2.200" /><path d="M3 15l5-5v10zM21 15l-5-5v10z" fill="#d81a1a" />
        </Svg>
        <span className="ml-[5px] tracking-[-0.1px]">Untitled - SigWave</span>
        <div className="mr-[35px] ml-auto flex items-center gap-[35px]">
          <i className="block h-px w-[10px] bg-black" />
          <i className="block h-[10px] w-[10px] border border-black" />
        </div>
      </div>
      <div className="flex h-[24px] shrink-0 items-center pl-[3px] text-[12px] tracking-[-0.1px] text-[#111]">
        <Dots n={4} />
        <div className="mt-[3px] ml-[4px] flex w-[652px] shrink-0 whitespace-nowrap">
          <MenuItem label="File" w="w-[28px]" />
          <MenuItem label="Edit" w="w-[30px]" />
          <MenuItem label="Zoom" w="w-[42px]" />
          <MenuItem label="Graph" w="w-[41px]" />
          <MenuItem label="Tools" w="w-[38px]" />
          <MenuItem label="View" w="w-[36px]" />
          <MenuItem label="Help" w="w-[40px]" />
        </div>
        <Cadence className="mt-[-3px] shrink-0 origin-left" />
      </div>
      <div className="h-[4px] shrink-0 bg-[#c80005]" />
      <div className="flex h-[34px] shrink-0">
        <Strip w="w-[97px]" icons={[SW.new, SW.open, SW.reload]} />
        <Strip w="w-[71px]" icons={[SW.copy, SW.paste]} />
        <Strip w="w-[233px]" icons={[SW.l0, SW.l1, SW.l2, SW.l3, SW.l3, SW.l2, SW.l6, SW.l7]} />
        <Strip w="w-[205px]" icons={[SW.hbar, SW.vbar, SW.hh, SW.vv, SW.diag, SW.diagT, SW.T]} />
        <div className="relative w-[125px]">
          <Strip w="w-[150px]" icons={[SW.sq1, SW.sq2, SW.sq3, SW.sq4, SW.sq5]} pad="pl-[5px]" />
          <div className="absolute top-[3px] left-[91px] h-[27px] w-[27px] border border-[#1a78c8] bg-[#9ccaf0]/25" />
        </div>
      </div>
      <div className="flex h-[34px] shrink-0 border-t-2 border-[#f4f4f4]">
        <Strip w="w-[178px]" icons={lineStyles} sel={0} />
        <Strip w="w-[314px]" icons={widthStyles} sel={0} pad="pl-[5px]" />
        <Strip w="w-[260px]" icons={marks} sel={0} pad="pl-[5px]" />
      </div>
      <div className="flex h-[604px] shrink-0 pt-[3px]">
        <div className="flex w-[32px] shrink-0 flex-col items-center bg-gradient-to-r from-[#ececec] to-[#bebebe]">
          <Dots vertical={false} n={5} />
          <div className="mt-[4px]">
            {Array.from({ length: 22 }, (_, i) => (
              <Grid9 key={i} sel={i === 1} last={i === 21} />
            ))}
          </div>
        </div>
        <div className="w-[2px] shrink-0" />
        <Tree />
        <div className="w-[5px] shrink-0" />
        <div className="h-[596px] w-[561px] shrink-0 border-t border-l border-[#696969]">
          <Chart />
        </div>
      </div>
      <div className="flex h-[20px] shrink-0 items-center border-t-2 border-[#8a8a8a] pl-[37px] text-[12px] text-[#111]">
        <span className="w-[488px] shrink-0 pt-[2px]">Ready</span>
        <span className="w-[16px] shrink-0 pt-[2px]">X:</span>
        <i className="block h-[16px] w-[81px] shrink-0 border-t border-l border-[#9a9a9a]" />
        <span className="ml-[4px] w-[15px] shrink-0 pt-[2px]">Y:</span>
        <i className="block h-[16px] w-[81px] shrink-0 border-t border-l border-[#9a9a9a]" />
        <i className="ml-[3px] block h-[16px] w-[20px] shrink-0 border-t border-l border-[#9a9a9a]" />
      </div>
    </div>
  );
}

/* ---------- taskbar ---------- */
const Chrome = () => (
  <>
    <circle cx="12" cy="12" r="11.500" fill="#34a853" />
    <path d="M12 12L2 6.300A11.500 11.500 0 0122 6.300L22.500 8H12z" fill="#ea4335" />
    <path d="M12 12L22.600 7.500A11.500 11.500 0 0111.500 23.500L16 14z" fill="#fbbc05" />
    <circle cx="12" cy="12" r="5.500" fill="#fff" />
    <circle cx="12" cy="12" r="4.200" fill="#4285f4" />
  </>
);

const TASKS: { icon: React.ReactNode; run?: boolean; active?: boolean }[] = [
  { icon: <><defs><linearGradient id="edge" x1="0" y1="0" x2="1" y2="1"><stop stopColor="#1b7fd0" /><stop offset=".5" stopColor="#27b3d8" /><stop offset="1" stopColor="#5bd36a" /></linearGradient></defs><path d="M1 11C2 4 7 .5 13 .5c6.500.5 11 5.500 10.500 10.500-.5 4-4 5.500-8 4.500-2-1-1-2-1-4 0-3-4-4-7-3-3 1-6 3-6.500 5z" fill="url(#edge)" /><path d="M.8 13c0-3.500 5-6 9-4.500-4 3-3 10.500 5 10.500 2 0 5-.5 7-2-2 4-6 7-11 6.500C5 23 .8 18.500.8 13z" fill="#1665b8" /></> },
  { icon: <><path d="M1 3h8l2 3h11v15H1z" fill="#f6c64c" /><path d="M1 8h21v13H1z" fill="#fbd975" /><path d="M5.500 21v-7h12v7h-3v-4h-6v4z" fill="#3f8ed8" /></>, run: true },
  { icon: <><path d="M8 6V1.500h8V6" stroke="#2d9ce6" strokeWidth="2" /><path d="M1 5h22v17.500H1z" fill="#f4f4f4" /><path d="M7 9h4.500v4.500H7z" fill="#f25022" /><path d="M12.500 9H17v4.500h-4.500z" fill="#7fba00" /><path d="M7 14.500h4.500V19H7z" fill="#00a4ef" /><path d="M12.500 14.500H17V19h-4.500z" fill="#ffb900" /></> },
  { icon: <><path d="M0 8l12-7 12 7v14H0z" fill="#0f5fae" /><path d="M3 7h18v9H3z" fill="#fff" /><path d="M0 8l12 8 12-8v14H0z" fill="#2aa0e8" /></> },
  { icon: <Chrome /> },
  { icon: <><path d="M12 .5l5 5-5 5-5-5z" fill="#f0554a" /><path d="M6 6.500l5 5-5 5-5-5z" fill="#4aa3d8" /><path d="M18 6.500l5 5-5 5-5-5z" fill="#8ac926" /><path d="M12 12.500l5 5-5 5.500-5-5.500z" fill="#f0c24a" /><path d="M12 4v15M8 9l8 6" stroke="#222" strokeWidth="1.500" /></>, run: true },
  { icon: <><Chrome /><circle cx="18" cy="18" r="6" fill="#d8451c" /><circle cx="18" cy="18" r="1.200" fill="#fff" /></>, run: true },
  { icon: <><path d="M0 0h24v24H0z" fill="#5a5a5a" /><path d="M0 2c8-2 15 0 20 9L0 9z" fill="#8fae4a" /><path d="M0 14h22c-4 7-12 9-22 9z" fill="#b81c1c" /><path d="M0 7.500h11V3l11 9-11 9v-4.500H0z" fill="#fff" /></> },
  { icon: <><Chrome /><circle cx="18" cy="17.500" r="6.500" fill="#7c52c8" /><text x="18" y="20" fontSize="6.500" fill="#fff" textAnchor="middle" className="font-['Noto_Sans_CJK_KR',sans-serif]">정현</text></>, run: true },
  { icon: <><path d="M3 3l6 4M3 10h7M3 20h6l4-4M13 6l8-3M17 11h5M16 14l5 5" stroke="#18e018" strokeWidth="1.800" /><circle cx="3" cy="3" r="2.300" fill="#18e018" /><circle cx="21" cy="4" r="2.300" fill="#18e018" /><circle cx="3" cy="21" r="2.300" fill="#18e018" /><circle cx="21" cy="20" r="2.300" fill="#18e018" /><circle cx="3" cy="11" r="2.300" fill="#18e018" /><circle cx="22" cy="11" r="2" fill="#18e018" /><path d="M4 19L17 5l-1 14M7 6l8 4M8 14h10" stroke="#e81818" strokeWidth="2.600" /></>, run: true },
  { icon: <><path d="M0 0h24v19l-3 2v3H4v-3l-4-2z" fill="#0b7d14" /><path d="M5 22h14" stroke="#f1ec20" strokeWidth="3" strokeDasharray="2 1" /><text x="2" y="8.500" fontSize="8.500" fill="#fff" className="font-['Liberation_Sans',sans-serif]">Sig</text><text x="2" y="16.500" fontSize="7.500" fill="#fff" textLength="21" lengthAdjust="spacingAndGlyphs" className="font-['Liberation_Sans',sans-serif]">Xplorer</text></>, run: true },
  { icon: <><path d="M0 15h3M2 7v12M0 19h5" stroke="#1111e8" strokeWidth="2" /><path d="M4 15c2-8 4-9 5-6s2-3 4-3 2 3 4-1 4 3 4 14l3 1" stroke="#1111e8" strokeWidth="2" /></>, run: true, active: true },
];

function Taskbar() {
  return (
    <div className={`flex h-[40px] shrink-0 bg-[#1d1d1e] text-white ${UI}`}>
      <div className="flex w-[48px] items-center justify-center">
        <Svg s={17}><path d="M0 3.500l10-1.400v9.400H0zM11.500 1.900L24 0v11.500H11.500zM0 12.900h10v9.400L0 20.900zM11.500 12.900H24V24l-12.500-1.800z" fill="#fff" /></Svg>
      </div>
      <div className="flex h-full w-[288px] items-center overflow-hidden border border-[#b8b8b8] bg-[#f2f2f2] pl-[11px]">
        <Svg s={18}><circle cx="14.500" cy="9" r="7" stroke="#333" strokeWidth="1.600" /><path d="M9.500 14.500L2 22" stroke="#333" strokeWidth="1.600" /></Svg>
        <span className="ml-[10px] font-['Noto_Sans_CJK_KR',sans-serif] text-[15.500px] text-[#444]">찾기</span>
        <svg width="76" height="38" viewBox="260 1041 76 38" className="ml-auto block" fill="none">
          <path d="M286 1041c-26 10-26 28 0 38M300 1041c-24 10-24 28 0 38M318 1041c-22 10-22 28 0 38" stroke="#ccc" />
          <circle cx="266.500" cy="1059" r="4.200" fill="#c4603c" />
          <circle cx="281" cy="1059" r="6.300" fill="#3f7fc0" /><path d="M277 1056l4-2 3 4-3 5z" fill="#6aa83c" />
          <circle cx="298" cy="1059" r="6.300" fill="#b9772e" /><path d="M293 1058h10" stroke="#e2b27a" strokeWidth="2" />
          <circle cx="313" cy="1059" r="5" fill="#b9b39c" /><path d="M307 1062l13-6" stroke="#8a8f9c" />
          <path d="M336 1041l-3 5-4-3-1 6-5 1 2 5-4 5 4 4-1 5 5 1 1 6 4-2 2 4z" fill="#ee7f1c" />
          <circle cx="337" cy="1060" r="12" fill="#f7b42c" />
        </svg>
      </div>
      <div className="flex w-[48px] items-center justify-center">
        <Svg s={17}><path d="M2 0v5h12V0M2 24v-5h12v5M2 8.500h12v7H2zM20 0v24M17 9.500h6" stroke="#fff" strokeWidth="1.500" /></Svg>
      </div>
      <div className="flex">
        {TASKS.map((t, i) => (
          <div key={i} className={`relative flex w-[49px] shrink-0 items-center justify-center ${t.active ? 'ml-[4px] bg-[#4b4b4d]' : ''}`}>
            <Svg s={24} className={t.active ? '' : 'translate-x-[2px]'}>{t.icon}</Svg>
            {t.run && <i className={`absolute bottom-0 block h-[3px] bg-[#76b9ed] ${t.active ? 'w-full' : 'w-[40px] translate-x-[2px]'}`} />}
          </div>
        ))}
      </div>
      <div className="ml-auto flex items-center">
        <svg width="28" height="28" viewBox="0 0 28 28" className="block shrink-0" fill="none">
          <path d="M6 18c-6 0-7-8 0-8 1-6 9-7 12-3 8-1 9 10 3 11z" fill="#c6dbf5" />
          <path d="M9 17v5M19 18v5" stroke="#2f7fe0" strokeWidth="5" strokeLinecap="round" />
          <circle cx="19" cy="7" r="6" fill="#c62a22" />
          <text x="19" y="10.500" fontSize="9.500" fill="#fff" textAnchor="middle">1</text>
        </svg>
        <span className="ml-[4px] text-[14.500px] tracking-[-0.5px]">20°C</span>
        <span className="ml-[8px] font-['Noto_Sans_CJK_KR',sans-serif] text-[14.500px]">비</span>
        <svg width="86" height="20" viewBox="1698 1050 86 20" className="ml-[25px] block shrink-0" fill="none" stroke="#fff" strokeWidth="1.300">
          <path d="M1699 1063l6-6 6 6" />
          <path d="M1721 1057.500h2.500l4-3.500v12l-4-3.500h-2.500zM1730 1057.500c1.500 2 1.500 3 0 5M1732.500 1055.500c3 3 3 6 0 9M1735 1053.500c4 4 4 9 0 13" />
          <path d="M1749.500 1055h11v8.500h-13v-4M1745.500 1054.500h5v4h-5zM1748 1058.500v8.500M1754 1063.500v3M1750 1066.500h8" />
          <path d="M1770 1067l5.500-14 5.500 14M1772 1062h7" strokeWidth="1.700" />
        </svg>
        <div className="mt-[2px] ml-[7px] flex w-[70px] flex-col items-center text-[12px] leading-[18px] whitespace-nowrap">
          <span>오후 10:07</span>
          <span>2023-11-05</span>
        </div>
        <svg width="26" height="26" viewBox="0 0 26 26" className="mt-[4px] mr-[13px] ml-[18px] block shrink-0" fill="none">
          <path d="M1 1h16v12H9l-4 4v-4H1z" fill="#fff" />
          <path d="M4 4.500h10M4 7.500h10M4 10.500h7" stroke="#1d1d1e" strokeWidth="1.200" />
          <circle cx="17" cy="16.500" r="7.500" fill="#333" stroke="#888" />
          <text x="17" y="21" fontSize="12" fill="#fff" textAnchor="middle" fontWeight="600">8</text>
        </svg>
        <i className="mr-[3px] block h-[40px] w-px bg-[#555]" />
      </div>
    </div>
  );
}

export default function App() {
  return (
    <div className={`relative flex h-[1080px] w-[1920px] flex-col overflow-hidden bg-[#f0eef1] ${UI}`}>
      <div className="flex h-[23px] shrink-0 items-center bg-white pl-[2px]">
        <Svg s={17}>
          <path d="M1 1h22v19l-3 3H4l-3-3z" fill="#0b7d14" stroke="#064d0a" />
          <path d="M4 5h5M6 8h3M4 14h2M8 12v4M11 13h2M15 12v4h4v-4" stroke="#e6ffe6" strokeWidth="1.600" />
          <path d="M4 22h16" stroke="#1a1a1a" strokeWidth="3" strokeDasharray="2 2" />
        </Svg>
        <span className="ml-[4px] text-[12px] tracking-[0.015px] whitespace-pre text-[#8d8d8d]">SigXplorer OrCAD PCB Designer w/ PSpice: N08600 1.0  Project: C:.../PMOD2BNC_SIMPLE_V1_0</span>
        <svg width="102" height="12" viewBox="0 0 102 12" className="mr-[20px] ml-auto block" fill="none" stroke="#777">
          <path d="M1 6.500h9M46.500 2.500h7v7h-7zM48.500 2.500v-2h7v7h-2M91 1.500l9 9M100 1.500l-9 9" />
        </svg>
      </div>
      <div className="flex h-[20px] shrink-0 items-center pl-[7px] text-[12px] tracking-[-0.15px] text-[#333]">
        <MenuItem label="File" w="w-[32px]" />
        <MenuItem label="Edit" w="w-[34px]" />
        <MenuItem label="View" w="w-[40px]" />
        <MenuItem label="Set" w="w-[31px]" />
        <MenuItem label="Analyze" w="w-[56px]" />
        <MenuItem label="Help" w="w-[40px]" />
        <Cadence className="mt-[-1px] mr-[6px] ml-auto origin-right" />
      </div>
      <div className="h-[3px] shrink-0 bg-[#b50f12]" />
      <div className="flex h-[34px] shrink-0">
        {MAIN_GROUPS.map((grp) => (
          <div key={grp.w} className={`${grp.w} ${grp.pad} flex shrink-0 items-center border-r border-[#b9b9b9] bg-gradient-to-b from-[#e6e6e6] to-[#bdbdbd] pb-[4px]`}>
            <Dots />
            <div className="flex">
              {grp.icons.map((n) => (
                <div key={n} className="flex w-[30.900px] justify-center">
                  <Svg s={21}>{ICONS[n]}</Svg>
                </div>
              ))}
            </div>
          </div>
        ))}
      </div>
      <div className="flex h-[943px] shrink-0">
        <div className="flex w-[84px] shrink-0 gap-[2px] pt-[1px]">
          <div className="flex w-[33px] flex-col gap-[1px]">
            <div className={`flex h-[229px] flex-col items-center pt-[2px] ${palette}`}>
              <Dots vertical={false} />
              {PAL_A.map((ic, i) => (
                <div key={i} className="flex h-[31px] items-center"><Svg s={21}>{ic}</Svg></div>
              ))}
            </div>
            <div className={`flex h-[200px] flex-col items-center pt-[3px] ${palette}`}>
              <Dots vertical={false} />
              {PAL_B.map((ic, i) => (
                <div key={i} className="flex h-[31px] items-center"><Svg s={21}>{ic}</Svg></div>
              ))}
            </div>
          </div>
          <div className="flex w-[48px] flex-col gap-[1px]">
            <div className={`flex h-[74px] flex-col items-center pt-[2px] ${palette}`}>
              <Dots vertical={false} n={8} />
              <PalBtn h="h-[31px]" down><path d="M6 22V5h7M6 14h7M13 4v16" stroke="#8f1318" strokeWidth="2" /><path d="M14 7l6-5v9zM14 16l6-5v9z" fill="#c23a3a" stroke="#8f1318" /></PalBtn>
              <PalBtn h="h-[31px]" down><path d="M3 18V2h14v4M8 22V6h7M8 14h7M13 5v16" stroke="#8f1318" strokeWidth="2" /><path d="M15 8l6-4v9zM15 17l6-5v9z" fill="#c23a3a" stroke="#8f1318" /></PalBtn>
            </div>
            <div className={`flex h-[200px] flex-col items-center pt-[2px] ${palette}`}>
              <Dots vertical={false} n={8} />
              <PalBtn h="h-[32px]"><BlockIcon /></PalBtn>
              <PalBtn h="h-[31px]" down><BlockIcon bottom /></PalBtn>
              <PalBtn h="h-[31px]" down><BlockIcon top /></PalBtn>
              <PalBtn h="h-[31px]"><GreyBlock /></PalBtn>
              <PalBtn h="h-[31px]"><GreyBlock k={1} /></PalBtn>
              <PalBtn h="h-[31px]"><GreyBlock k={2} /></PalBtn>
            </div>
            <div className={`flex h-[75px] flex-col items-center pt-[2px] ${palette}`}>
              <Dots vertical={false} n={8} />
              <PalBtn h="h-[33px]">
                <path d="M6 3v10h12v8" stroke="#b5772a" strokeDasharray="2 1" />
                <path d="M4.500 4h3v8h-3zM16.500 13.500h3v7h-3z" fill="#c3d5f6" stroke="#4d6aa5" />
                <path d="M4 2.500h4M10 13h4M16 22h4" stroke="#d98a1c" strokeWidth="2.600" />
              </PalBtn>
              <PalBtn h="h-[31px]" down>
                <path d="M8 2h8M8 12h8M8 22h8" stroke="#d98a1c" strokeWidth="2.600" />
                <path d="M10 4h4v6h-4zM10 14h4v6h-4z" fill="#c3d5f6" stroke="#4d6aa5" />
              </PalBtn>
            </div>
          </div>
        </div>
        <div className="flex w-[1471px] shrink-0 flex-col">
          <div className="h-[811px] border-t-2 border-l border-[#7d7d7d] bg-black"><Schematic /></div>
          <div className="mt-[7px] flex">
            <SideGrip label="Results" />
            <div className="ml-[1px] w-[715px]"><Results /></div>
            <div className="ml-[6px] flex gap-[1px]">
              <SideGrip label="Comman" />
              <CommandPane />
            </div>
          </div>
          <div className="mt-[10px] ml-[24px] flex h-[21px] w-[110px] items-center justify-center border border-b-0 border-[#8fa5bd] bg-[#ebebee] pt-[2px] text-[12px] tracking-[-0.1px] text-[#222]">Measurements</div>
        </div>
        <div className="ml-[8px] h-[938px] w-[353px] border-b border-l border-[#7a7a7a] border-b-[#fff]" />
      </div>
      <div className={`flex h-[17px] shrink-0 border-t-2 border-[#7a7a7a] text-black ${ARIAL} text-[12px] leading-[15px]`}>
        <div className="w-[1600px] border-l border-[#7a7a7a] pl-[1px] tracking-[-0.5px]">Idle</div>
        <div className="w-[52px] border-l border-[#7a7a7a] bg-[#00ff00]" />
        <div className="ml-[1px] w-[131px] border-l border-[#7a7a7a]" />
        <div className="ml-[2px] flex-1 border-l border-[#7a7a7a] text-center tracking-[-0.6px]">5533.00, 4226.50</div>
      </div>
      <Taskbar />
      <SigWave />
    </div>
  );
}
